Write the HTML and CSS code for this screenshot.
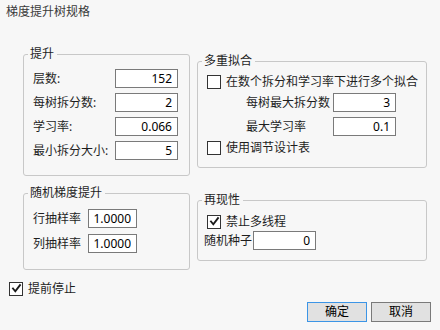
FILE: index.html
```html
<!DOCTYPE html>
<html lang="zh-CN">
<head>
    <meta charset="UTF-8">
    <title>梯度提升树规格</title>
    <link rel="stylesheet" href="styles.css">
</head>
<body>
    <div class="dialog">
        <div class="title">梯度提升树规格</div>

        <div class="columns">
            <div class="col col-left">
                <fieldset class="group">
                    <legend>提升</legend>
                    <div class="group-body boost">
                        <label>层数:</label><input class="num" type="text" value="152">
                        <label>每树拆分数:</label><input class="num" type="text" value="2">
                        <label>学习率:</label><input class="num" type="text" value="0.066">
                        <label>最小拆分大小:</label><input class="num" type="text" value="5">
                    </div>
                </fieldset>

                <fieldset class="group stochastic">
                    <legend>随机梯度提升</legend>
                    <div class="group-body sampling">
                        <label>行抽样率</label><input class="num" type="text" value="1.0000">
                        <label>列抽样率</label><input class="num" type="text" value="1.0000">
                    </div>
                </fieldset>
            </div>

            <div class="col col-right">
                <fieldset class="group">
                    <legend>多重拟合</legend>
                    <div class="group-body multi">
                        <div class="check-row">
                            <span class="box"></span>
                            <span>在数个拆分和学习率下进行多个拟合</span>
                        </div>
                        <div class="sub-grid">
                            <label>每树最大拆分数</label><input class="num" type="text" value="3">
                            <label>最大学习率</label><input class="num" type="text" value="0.1">
                        </div>
                        <div class="check-row">
                            <span class="box"></span>
                            <span>使用调节设计表</span>
                        </div>
                    </div>
                </fieldset>

                <fieldset class="group repro">
                    <legend>再现性</legend>
                    <div class="group-body seed">
                        <div class="check-row">
                            <span class="box"><svg viewBox="0 0 11 11" width="11" height="11"><polyline points="2,5.5 4.3,8.3 9,2.2" /></svg></span>
                            <span>禁止多线程</span>
                        </div>
                        <div class="seed-row">
                            <label>随机种子</label><input class="num" type="text" value="0">
                        </div>
                    </div>
                </fieldset>
            </div>
        </div>

        <div class="check-row early">
            <span class="box"><svg viewBox="0 0 11 11" width="11" height="11"><polyline points="2,5.5 4.3,8.3 9,2.2" /></svg></span>
            <span>提前停止</span>
        </div>

        <div class="buttons">
            <button class="btn default">确定</button>
            <button class="btn">取消</button>
        </div>
    </div>
</body>
</html>
```

FILE: styles.css
```css
html, body {
    margin: 0;
    background: #f7f7f7;
}
body {
    font-family: "Noto Sans", "Noto Sans CJK SC", sans-serif;
    font-size: 12px;
    color: #1e1e1e;
    width: 440px;
    height: 330px;
    overflow: hidden;
}
.title {
    padding: 4px 0 0 6px;
    line-height: 16px;
    color: #3a3a3a;
}
.columns {
    display: flex;
    gap: 7px;
    margin-top: 28px;
    padding-left: 23px;
}
.col {
    display: flex;
    flex-direction: column;
}
.col-left {
    width: 167px;
}
.col-right {
    width: 230px;
    padding-top: 7px;
}
.group {
    margin: 0;
    padding: 0;
    min-width: 0;
    border: 1px solid #c8c8c8;
    border-radius: 3px;
}
.group legend {
    margin-left: 4px;
    padding: 0 3px 0 2px;
    line-height: 12px;
    font-size: 12px;
}
.stochastic {
    margin-top: 11px;
}
.repro {
    margin-top: 26px;
}
.group-body label {
    line-height: 14px;
    white-space: nowrap;
}
.num {
    box-sizing: border-box;
    height: 19px;
    margin: 0;
    padding: 0 5px 0 2px;
    border: 1px solid #7a7a7a;
    border-radius: 0;
    background: #fff;
    font: inherit;
    color: #000;
    text-align: right;
    outline: none;
}
.boost {
    display: grid;
    grid-template-columns: 82px 63px;
    row-gap: 5px;
    align-items: center;
    padding: 9px 11px 15px 9px;
}
.sampling {
    display: grid;
    grid-template-columns: 48px 49px;
    column-gap: 7px;
    row-gap: 6px;
    align-items: center;
    padding: 10px 0 16px 9px;
}
.multi {
    display: flex;
    flex-direction: column;
    gap: 5px;
    padding: 8px 9px 13px 9px;
}
.sub-grid {
    display: grid;
    grid-template-columns: 87px 63px;
    row-gap: 5px;
    align-items: center;
    margin-left: 39px;
}
.seed {
    display: flex;
    flex-direction: column;
    gap: 3px;
    padding: 9px 6px 10px 6px;
}
.seed .check-row {
    margin-left: 3px;
}
.seed-row {
    display: grid;
    grid-template-columns: 49px 63px;
    align-items: center;
}
.check-row {
    display: flex;
    align-items: center;
    gap: 5px;
    height: 13px;
    line-height: 13px;
    white-space: nowrap;
}
.box {
    box-sizing: border-box;
    width: 14px;
    height: 14px;
    flex: none;
    display: flex;
    align-items: center;
    justify-content: center;
    border: 1px solid #333;
    background: #fff;
}
.box svg polyline {
    fill: none;
    stroke: #1a1a1a;
    stroke-width: 1.9;
    stroke-linecap: square;
}
.early {
    margin-top: 12px;
    padding-left: 9px;
}
.buttons {
    display: flex;
    justify-content: flex-end;
    gap: 4px;
    margin-top: 7px;
    padding-right: 9px;
}
.btn {
    box-sizing: border-box;
    width: 60px;
    height: 20px;
    margin: 0;
    padding: 0;
    border: 1px solid #7a7a7a;
    border-radius: 0;
    background: #e1e1e1;
    font: inherit;
    color: #000;
    line-height: 16px;
}
.btn.default {
    border-color: #3c95e6;
}
```
